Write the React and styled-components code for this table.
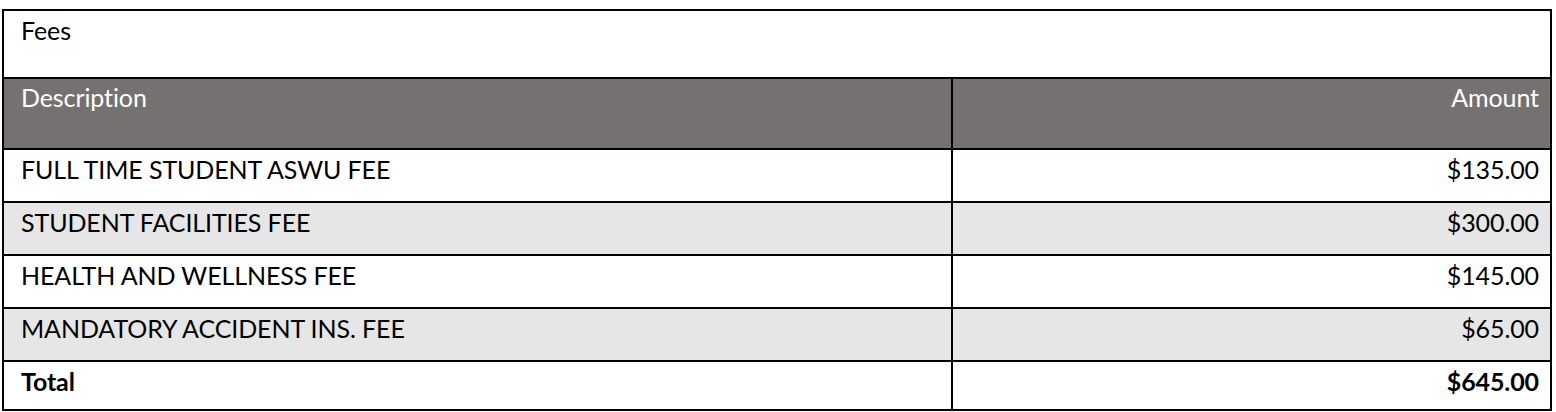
import styled, { createGlobalStyle } from "styled-components";

const GlobalStyle = createGlobalStyle`
  html, body {
    margin: 0;
    padding: 0;
    background: #ffffff;
  }
  body {
    font-family: Lato, "Open Sans", sans-serif;
    color: #000;
  }
`;

const Page = styled.div`
  padding: 9px 4px 0 2px;
`;

const Table = styled.table`
  width: 1550px;
  border-collapse: separate;
  border-spacing: 0;
  border-top: 2px solid #000;
  border-left: 2px solid #000;
  table-layout: fixed;
  font-size: 25px;
  letter-spacing: -0.1px;
  line-height: 1.2;
`;

const Cell = styled.td`
  box-sizing: border-box;
  border-right: 2px solid #000;
  border-bottom: 2px solid #000;
  vertical-align: top;
  padding: ${(p) => p.$pt ?? 4}px 11px 0 17px;
  height: ${(p) => p.$h || 53}px;
  text-align: ${(p) => (p.$right ? "right" : "left")};
  font-weight: ${(p) => (p.$bold ? 700 : 400)};
  white-space: nowrap;
`;

const Row = styled.tr`
  background: ${(p) => p.$bg || "#ffffff"};
  color: ${(p) => p.$fg || "#000000"};
`;

const fees = [
  { name: "FULL TIME STUDENT ASWU FEE", amount: "$135.00" },
  { name: "STUDENT FACILITIES FEE", amount: "$300.00" },
  { name: "HEALTH AND WELLNESS FEE", amount: "$145.00" },
  { name: "MANDATORY ACCIDENT INS. FEE", amount: "$65.00" },
];

export default function App() {
  return (
    <>
      <GlobalStyle />
      <Page>
        <Table>
          <colgroup>
            <col style={{ width: "949px" }} />
            <col />
          </colgroup>
          <tbody>
            <Row>
              <Cell colSpan={2} $h={68}>Fees</Cell>
            </Row>
            <Row $bg="#767171" $fg="#ffffff">
              <Cell $h={71} $pt={3}>Description</Cell>
              <Cell $h={71} $pt={3} $right>Amount</Cell>
            </Row>
            {fees.map((f, i) => (
              <Row key={f.name} $bg={i % 2 === 1 ? "#e7e6e6" : "#ffffff"}>
                <Cell>{f.name}</Cell>
                <Cell $right>{f.amount}</Cell>
              </Row>
            ))}
            <Row>
              <Cell $bold $h={49}>Total</Cell>
              <Cell $bold $right $h={49}>$645.00</Cell>
            </Row>
          </tbody>
        </Table>
      </Page>
    </>
  );
}
